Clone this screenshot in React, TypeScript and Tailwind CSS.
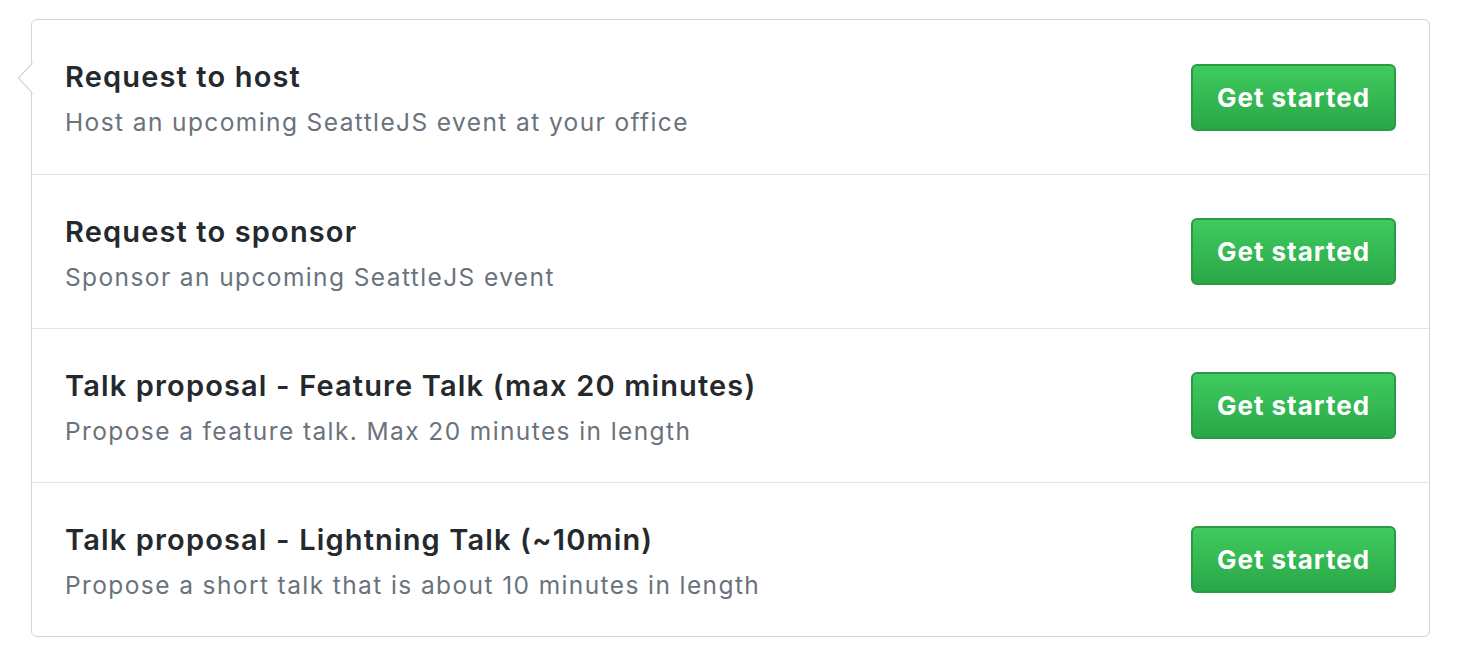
import React from 'react';

interface Option {
  title: string;
  description: string;
}

const options: Option[] = [
  { title: 'Request to host', description: 'Host an upcoming SeattleJS event at your office' },
  { title: 'Request to sponsor', description: 'Sponsor an upcoming SeattleJS event' },
  { title: 'Talk proposal - Feature Talk (max 20 minutes)', description: 'Propose a feature talk. Max 20 minutes in length' },
  { title: 'Talk proposal - Lightning Talk (~10min)', description: 'Propose a short talk that is about 10 minutes in length' },
];

const App: React.FC = () => {
  return (
    <div
      className="w-[1480px] h-[672px] bg-white pt-[19px] pl-[31px]"
      style={{ fontFamily: 'Inter, "Noto Sans", sans-serif' }}
    >
      <div className="relative w-[1399px] border border-[#d1d5da] rounded-[6px] bg-white">
        {/* caret pointing left */}
        <svg className="absolute left-[-15px] top-[42px]" width="16" height="32" viewBox="0 0 16 32">
          <path d="M15.5 0 L15.5 1 L1.5 16 L15.5 31 L15.5 32" fill="#fff" stroke="#d1d5da" strokeWidth="1.2" />
          <rect x="15" y="1" width="2" height="30" fill="#fff" />
        </svg>
        {options.map((opt, i) => (
          <div
            key={i}
            className={`flex items-center justify-between h-[154px] pl-[33px] pr-[33px] ${
              i > 0 ? 'border-t border-[#e1e4e8]' : 'h-[153px]'
            }`}
          >
            <div className="flex flex-col">
              <h3 className="text-[29px] leading-[42px] font-semibold text-[#24292e] tracking-[1.15px] -mt-[1px]">
                {opt.title}
              </h3>
              <p className="text-[24.5px] leading-[30px] text-[#6a737d] mt-[9px] tracking-[1.4px]">{opt.description}</p>
            </div>
            <button className="w-[205px] h-[67px] rounded-[6px] border-2 border-[#2a9a45] bg-gradient-to-b from-[#3fcb5f] to-[#2aa748] text-white text-[26px] font-bold tracking-[1px]">
              Get started
            </button>
          </div>
        ))}
      </div>
    </div>
  );
};

export default App;
